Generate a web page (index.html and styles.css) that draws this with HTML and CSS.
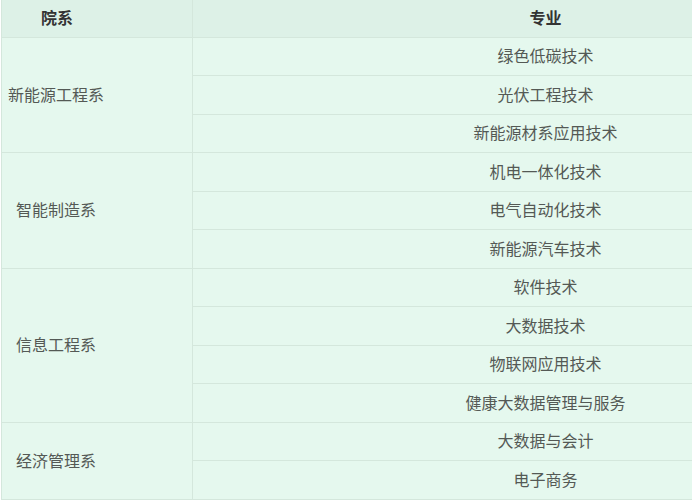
FILE: index.html
```html
<!DOCTYPE html>
<html lang="zh">
<head>
<meta charset="utf-8">
<title>院系专业</title>
<link rel="stylesheet" href="styles.css">
</head>
<body>
<div class="page">
<table class="majors">
  <colgroup><col class="col-dept"><col class="col-major"></colgroup>
  <thead>
    <tr><th class="dept-head">院系</th><th class="major-head">专业</th></tr>
  </thead>
  <tbody>
    <tr><td class="dept dept-wide" rowspan="3">新能源工程系</td><td class="major">绿色低碳技术</td></tr>
    <tr><td class="major">光伏工程技术</td></tr>
    <tr><td class="major">新能源材系应用技术</td></tr>
    <tr><td class="dept" rowspan="3">智能制造系</td><td class="major">机电一体化技术</td></tr>
    <tr><td class="major">电气自动化技术</td></tr>
    <tr><td class="major">新能源汽车技术</td></tr>
    <tr><td class="dept" rowspan="4">信息工程系</td><td class="major">软件技术</td></tr>
    <tr><td class="major">大数据技术</td></tr>
    <tr><td class="major">物联网应用技术</td></tr>
    <tr><td class="major">健康大数据管理与服务</td></tr>
    <tr><td class="dept" rowspan="2">经济管理系</td><td class="major">大数据与会计</td></tr>
    <tr><td class="major">电子商务</td></tr>
  </tbody>
</table>
</div>
</body>
</html>
```

FILE: styles.css
```css
html, body {
  margin: 0;
  padding: 0;
  background: #ffffff;
}
.page {
  width: 692px;
  height: 500px;
  overflow: hidden;
  padding-left: 1px;
  box-sizing: border-box;
}
.majors {
  border-collapse: collapse;
  width: 898px;
  table-layout: fixed;
  font-family: "Noto Sans CJK SC", "Microsoft YaHei", sans-serif;
  font-size: 16px;
  line-height: 22px;
  color: #545955;
}
.col-dept {
  width: 191px;
}
.majors th,
.majors td {
  border: 1px solid #d4e7dc;
  padding: 0 0 2px 0;
  vertical-align: middle;
}
.majors thead tr {
  height: 37px;
}
.majors th {
  background: #ddf1e7;
  color: #333333;
  font-weight: bold;
  border-top: none;
}
.dept-head {
  text-align: left;
  padding-left: 39px !important;
}
.major-head {
  text-align: center;
}
.majors tbody tr {
  height: 38.5px;
}
.majors td {
  background: #e5f8ee;
}
.dept {
  text-align: left;
  padding-left: 14px !important;
}
.dept-wide {
  padding-left: 6px !important;
}
.major {
  text-align: center;
}
```
